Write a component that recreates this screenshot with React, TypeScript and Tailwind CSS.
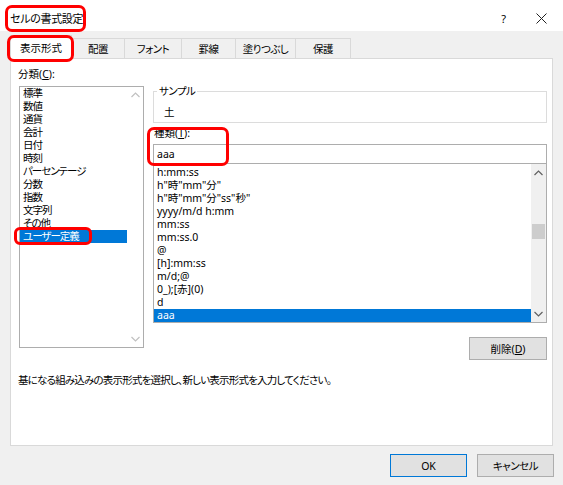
import React from "react";

const font = "font-['Noto_Sans','Noto_Sans_CJK_JP',sans-serif] [font-feature-settings:'palt']";

function Chevron({ up, color }: { up?: boolean; color: string }) {
  return (
    <svg width="9" height="6" viewBox="0 0 9 6">
      {up ? (
        <polyline points="0.5,5 4.5,1 8.5,5" fill="none" stroke={color} strokeWidth="1.2" />
      ) : (
        <polyline points="0.5,1 4.5,5 8.5,1" fill="none" stroke={color} strokeWidth="1.2" />
      )}
    </svg>
  );
}

const categories = [
  "標準",
  "数値",
  "通貨",
  "会計",
  "日付",
  "時刻",
  "パーセンテージ",
  "分数",
  "指数",
  "文字列",
  "その他",
  "ユーザー定義",
];

const formats = [
  "h:mm:ss",
  'h"時"mm"分"',
  'h"時"mm"分"ss"秒"',
  "yyyy/m/d h:mm",
  "mm:ss",
  "mm:ss.0",
  "@",
  "[h]:mm:ss",
  "m/d;@",
  "0_);[赤](0)",
  "d",
  "aaa",
];

const tabs = [
  { label: "配置", w: "w-[53px]" },
  { label: "フォント", w: "w-[57px]" },
  { label: "罫線", w: "w-[54px]" },
  { label: "塗りつぶし", w: "w-[60px]" },
  { label: "保護", w: "w-[55px]" },
];

export default function App() {
  return (
    <div className={`relative w-[563px] h-[485px] bg-[#f0f0f0] overflow-hidden text-[10.5px] text-black ${font}`}>
      {/* Title bar */}
      <div className="h-[31px] bg-white flex items-center pl-[10px]">
        <span className="text-[11px] leading-[14px] mt-[6px] tracking-[-0.3px]">セルの書式設定</span>
        <span className="ml-auto mr-[30px] text-[11px] leading-[14px] mt-[6px]">?</span>
        <span className="mr-[16px] mt-[6px] flex items-center">
          <svg width="11" height="11" viewBox="0 0 11 11">
            <line x1="0.5" y1="0.5" x2="10.5" y2="10.5" stroke="#222" strokeWidth="1" />
            <line x1="10.5" y1="0.5" x2="0.5" y2="10.5" stroke="#222" strokeWidth="1" />
          </svg>
        </span>
      </div>

      {/* Tabs */}
      <div className="relative z-10 h-[27px] flex items-end pl-[10px]">
        <div className="w-[62px] h-[24px] mb-[-1px] bg-white border border-b-0 border-[#d9d9d9] flex items-center justify-center leading-[14px]">
          表示形式
        </div>
        {tabs.map((t) => (
          <div
            key={t.label}
            className={`${t.w} h-[20px] border-t border-r border-[#d9d9d9] flex items-center justify-center leading-[14px] pt-[1px] tracking-[-0.5px]`}
          >
            {t.label}
          </div>
        ))}
      </div>

      {/* Panel */}
      <div className="ml-[10px] w-[543px] h-[388px] bg-white border border-[#d9d9d9] flex flex-col pl-[8px] pt-[8px]">
        <div className="flex items-start gap-[9px]">
          {/* Left column */}
          <div className="flex flex-col w-[125px]">
            <div className="leading-[14px] -ml-[1px]">
              分類(<span className="underline">C</span>):
            </div>
            <div className="mt-[5px] h-[262px] border border-[#adadad] flex">
              <div className="flex-1 flex flex-col">
                {categories.map((c) => (
                  <div
                    key={c}
                    className={`h-[13px] leading-[13px] pl-[3px] whitespace-nowrap tracking-[-1px] ${
                      c === "ユーザー定義" ? "bg-[#0078d7] text-white" : ""
                    }`}
                  >
                    {c}
                  </div>
                ))}
              </div>
              <div className="w-[16px] flex flex-col justify-between items-center py-[5px]">
                <Chevron up color="#c0c0c0" />
                <Chevron color="#c0c0c0" />
              </div>
            </div>
          </div>

          {/* Right column */}
          <div className="flex flex-col w-[394px]">
            <div className="relative mt-[24px] h-[32px] border border-[#dcdcdc] pt-[13px] pl-[10px] leading-[14px]">
              <span className="absolute -top-[8px] left-[3px] bg-white px-[2px] leading-[14px] tracking-[-0.5px]">サンプル</span>
              土
            </div>
            <div className="mt-[3px] leading-[14px] pl-[1px]">
              種類(<span className="underline">T</span>):
            </div>
            <div className="mt-[4px] h-[20px] border border-[#adadad] flex items-center pl-[3px] leading-[14px]">
              aaa
            </div>
            <div className="mt-[-1px] h-[160px] border border-[#adadad] flex">
              <div className="flex-1 flex flex-col pt-[2px]">
                {formats.map((f) => (
                  <div
                    key={f}
                    className={`h-[13px] leading-[13px] pl-[3px] whitespace-nowrap ${
                      f === "aaa" ? "bg-[#0078d7] text-white" : ""
                    }`}
                  >
                    {f}
                  </div>
                ))}
              </div>
              <div className="w-[15px] bg-[#f0f0f0] flex flex-col items-center">
                <div className="h-[17px] flex items-center justify-center">
                  <Chevron up color="#606060" />
                </div>
                <div className="mt-[43px] w-[13px] h-[15px] bg-[#cdcdcd]" />
                <div className="mt-auto h-[17px] flex items-center justify-center">
                  <Chevron color="#606060" />
                </div>
              </div>
            </div>
            <div className="self-end mt-[14px] w-[78px] h-[23px] bg-[#e1e1e1] border border-[#adadad] flex items-center justify-center leading-[14px]">
              削除(<span className="underline">D</span>)
            </div>
          </div>
        </div>
        <div className="mt-[13px] leading-[14px] -ml-[1px] tracking-[-0.8px]">
          基になる組み込みの表示形式を選択し、新しい表示形式を入力してください。
        </div>
      </div>

      {/* Buttons */}
      <div className="flex justify-end gap-[10px] pr-[9px] mt-[8px]">
        <div className="w-[77px] h-[23px] bg-[#e1e1e1] border border-[#0078d7] flex items-center justify-center leading-[14px]">
          OK
        </div>
        <div className="w-[77px] h-[23px] bg-[#e1e1e1] border border-[#adadad] flex items-center justify-center leading-[14px] tracking-[-0.5px]">
          キャンセル
        </div>
      </div>

      {/* Red annotation rings */}
      <div className="absolute left-[5px] top-[5px] w-[81px] h-[27px] border-[3px] border-[#ff0000] rounded-[7px] pointer-events-none" />
      <div className="absolute left-[7px] top-[35px] w-[67px] h-[27px] border-[3px] border-[#ff0000] rounded-[7px] pointer-events-none z-20" />
      <div className="absolute left-[14px] top-[227px] w-[78px] h-[18px] border-[3px] border-[#ff0000] rounded-[6px] pointer-events-none" />
      <div className="absolute left-[147px] top-[127px] w-[82px] h-[39px] border-[3px] border-[#ff0000] rounded-[7px] pointer-events-none" />
    </div>
  );
}
